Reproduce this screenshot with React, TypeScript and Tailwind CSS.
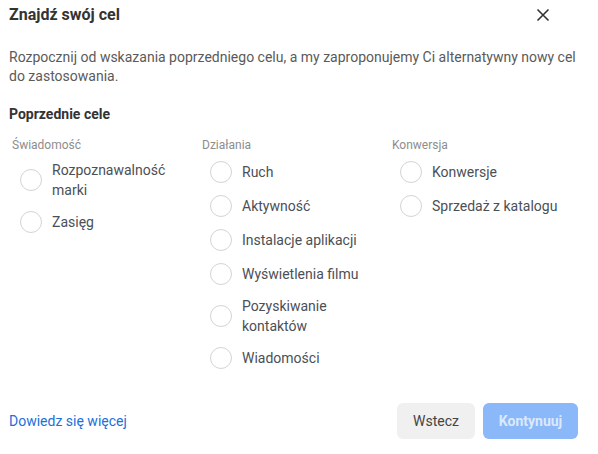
const COLUMNS = [
  { title: "Świadomość", items: ["Rozpoznawalność marki", "Zasięg"] },
  {
    title: "Działania",
    items: [
      "Ruch",
      "Aktywność",
      "Instalacje aplikacji",
      "Wyświetlenia filmu",
      "Pozyskiwanie kontaktów",
      "Wiadomości",
    ],
  },
  { title: "Konwersja", items: ["Konwersje", "Sprzedaż z katalogu"] },
];

function Radio({ label }: { label: string }) {
  return (
    <label className="flex items-center gap-[10px] min-h-[24px] cursor-pointer">
      <span className="w-[22px] h-[22px] shrink-0 rounded-full border border-[#d4d4d4] bg-white" />
      <span className="text-[14px] leading-[20px] text-[#4b4f56] max-w-[135px]">{label}</span>
    </label>
  );
}

export default function App() {
  return (
    <div
      className="w-[598px] h-[454px] bg-white pl-[9px] pr-[20px] flex flex-col"
      style={{ fontFamily: "Roboto, 'Liberation Sans', sans-serif" }}
    >
      <div className="flex items-center justify-between h-[29px] pt-[1px]">
        <h1 className="text-[16px] font-bold text-[#333] leading-[20px]">Znajdź swój cel</h1>
        <button className="w-[24px] h-[24px] mr-[23px] flex items-center justify-center text-[#333]">
          <svg width="14" height="14" viewBox="0 0 14 14" fill="none" stroke="currentColor" strokeWidth="1.6">
            <path d="M1.5 1.5 L12.5 12.5 M12.5 1.5 L1.5 12.5" />
          </svg>
        </button>
      </div>

      <p className="mt-[19px] text-[14px] leading-[19px] text-[#5a5a5a]">
        Rozpocznij od wskazania poprzedniego celu, a my zaproponujemy Ci alternatywny nowy cel do zastosowania.
      </p>

      <h2 className="mt-[18px] text-[14px] leading-[20px] font-bold text-[#333]">Poprzednie cele</h2>

      <div className="mt-[13px] grid grid-cols-[190px_190px_190px] pl-[3px]">
        {COLUMNS.map((col) => (
          <div key={col.title}>
            <div className="text-[12px] leading-[16px] text-[#8d8d8d]">{col.title}</div>
            <div className="mt-[7px] pl-[8px] flex flex-col gap-[10px]">
              {col.items.map((item) => (
                <Radio key={item} label={item} />
              ))}
            </div>
          </div>
        ))}
      </div>

      <div className="mt-auto mb-[15px] flex items-center justify-between">
        <a className="text-[14px] text-[#216fdb]">Dowiedz się więcej</a>
        <div className="flex gap-[8px]">
          <button className="h-[36px] w-[78px] rounded-[6px] bg-[#f0f0f0] text-[14px] text-[#444]">
            Wstecz
          </button>
          <button className="h-[36px] w-[95px] rounded-[6px] bg-[#8ab8f8] text-[14px] font-bold text-[#dce9fc]">
            Kontynuuj
          </button>
        </div>
      </div>
    </div>
  );
}
